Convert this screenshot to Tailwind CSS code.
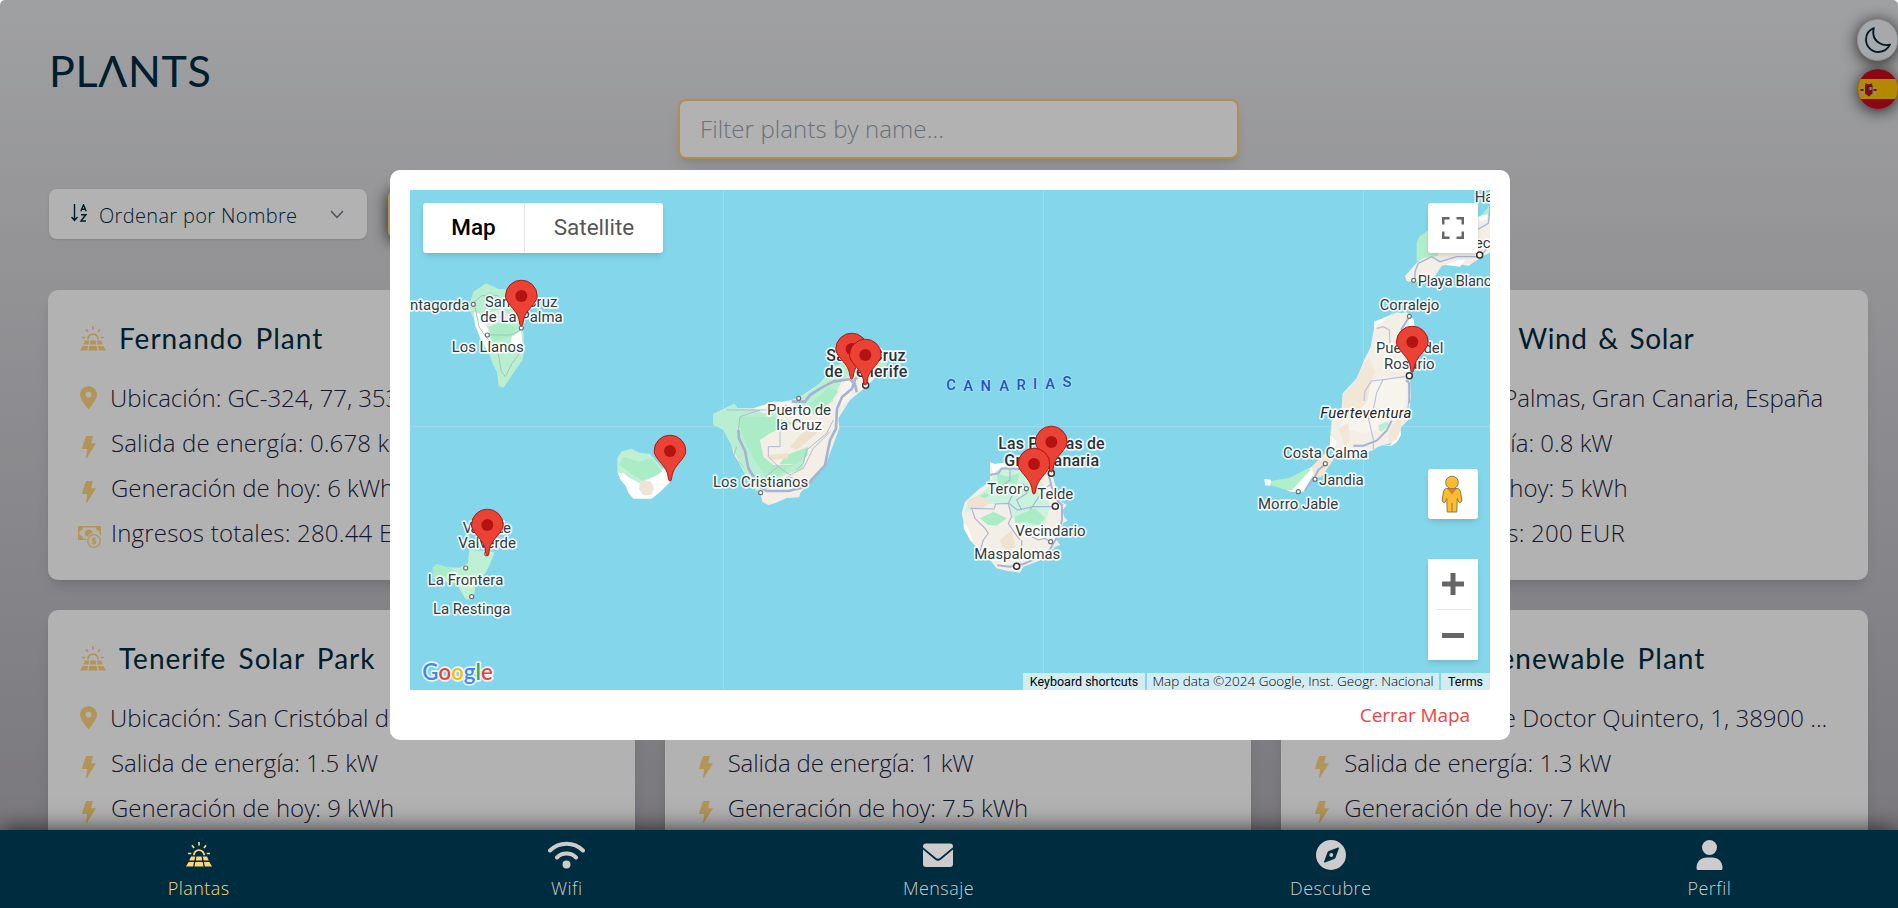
<!DOCTYPE html>
<html lang="es">
<head>
<meta charset="utf-8">
<title>Plants</title>
<script src="https://cdn.jsdelivr.net/npm/@tailwindcss/browser@4"></script>
</head>
<body class="w-[1898px] h-[908px] overflow-hidden bg-white font-['Open_Sans',sans-serif]">
<svg class="hidden">
  <symbol id="solar" viewBox="0 0 26 26"><g fill="currentColor"><path d="M5 14.6h4.2l-.9 3.9H3.2zM10.4 14.6h5.2l.6 3.9H9.8zM16.8 14.6H21l1.8 3.9h-5.100zM2.600 20h5.500l-1 4.600H0zM9.300 20h7.400l.800 4.600H8.500zM17.900 20h5.500l2.600 4.600h-7.100z"/><path d="M6.900 13.300a6.100 6.100 0 0 1 12.200 0h-1.800a4.300 4.300 0 0 0-8.600 0z"/></g><path stroke="currentColor" stroke-width="1.700" d="M13 0v3.400M6 3.200l2 2.800M20 3.200l-2 2.800M2 11.500h3.300M20.700 11.500H24"/></symbol>
  <symbol id="pin" viewBox="0 0 384 512"><path fill="currentColor" d="M215.700 499.200C267 435 384 279.400 384 192 384 86 298 0 192 0S0 86 0 192c0 87.400 117 243 168.300 307.200a30 30 0 0 0 47.400 0zM192 128a64 64 0 1 1 0 128 64 64 0 1 1 0-128z"/></symbol>
  <symbol id="bolt" viewBox="0 0 14 22"><path fill="currentColor" d="M4.200 0h6.600L9.200 7.300H14L4.700 22l-.800-.2L5.200 13H.6L0 12z"/></symbol>
  <symbol id="money" viewBox="0 0 23 22"><path fill="currentColor" fill-rule="evenodd" d="M1 0h21a1 1 0 0 1 1 1v8.500a8 8 0 0 0-1.500-1.500V5A4 4 0 0 1 18 1.500H5A4 4 0 0 1 1.500 5v4A4 4 0 0 1 5 12.500h3.500q-.5.8-.6 1.500H1a1 1 0 0 1-1-1V1a1 1 0 0 1 1-1zM11.500 3.800a3.300 3.300 0 0 1 3 3.200 8 8 0 0 0-5 3.400A3.300 3.300 0 0 1 11.500 3.800z"/><circle cx="16" cy="15" r="6.300" fill="none" stroke="currentColor" stroke-width="1.300"/><path fill="none" stroke="currentColor" stroke-width="1.200" d="M17.800 13.200q-.6-.7-1.800-.7c-2.300 0-2.300 2.300 0 2.500s2.300 2.500 0 2.500q-1.200 0-1.900-.8M16 11.200v7.600"/></symbol>
  <symbol id="marker" viewBox="-50 -140 100 146"><path fill="#ea4335" stroke="#b31412" stroke-width="3" d="M0 0C-3 0-4-3-5-9-8-36-22-47-36-65-43-75-47.500-81-47.500-90a47.500 47.500 0 0 1 95 0c0 9-4.500 15-11.500 25C22-47 8-36 5-9 4-3 3 0 0 0z"/><circle cy="-90" r="18" fill="#b31412"/></symbol>
</svg>

<div class="relative w-full h-full rounded-t-[5px] overflow-hidden bg-linear-to-b from-[#e5e6e8] to-[#aaa8b0]">
  <!-- Page content -->
  <main class="flex flex-col pl-12 pr-[30px]">
    <h1 class="h-[98px] pt-[39px] text-[43px] leading-[64px] text-[#002c3f] font-['Lato',sans-serif] pl-px tracking-[0.7px]">PL&#923;NTS</h1>
    <div class="mt-px ml-[630px] w-[561px] h-[60px] rounded-lg border-[2.500px] border-[#fccd6b] bg-white shadow-lg flex items-center pl-[20px]">
      <span class="text-[24px] font-light text-gray-400 whitespace-nowrap tracking-[0.100px]">Filter plants by name...</span>
    </div>
    <div class="flex mt-[30px] gap-[21px]">
      <div class="w-[318px] ml-px h-[50px] rounded-lg bg-white shadow flex items-center pl-[22px] pr-[23px] text-[#002c3f]">
        <svg class="w-4 h-[18px] -mt-[3px]" viewBox="0 0 16 18" fill="none" stroke="currentColor" stroke-width="1.400"><path d="M3.500 0v16M.5 13l3 3.500 3-3.500M9.800 7.300L12.500.8l2.700 6.500M10.700 5.300h3.600M10 10.800h4.800L10 17h5"/></svg>
        <span class="ml-[12px] mt-[4px] text-[20px] font-light whitespace-nowrap tracking-[0.330px]">Ordenar por Nombre</span>
        <svg class="ml-auto w-[14px] h-[9px] text-gray-500" viewBox="0 0 14 9" fill="none" stroke="currentColor" stroke-width="1.400"><path d="M1 1l6 6.500L13 1"/></svg>
      </div>
      <div class="w-[60px] h-[50px] rounded-lg bg-[#ffd57b] shadow-[0_2px_16px_rgba(0,0,0,0.8)]"></div>
    </div>

    <div class="grid grid-cols-3 gap-[30px] mt-[51px]">
      <article class="h-[290px] rounded-[10px] bg-white shadow-lg pt-[25px] pl-[30px] text-[24px] font-light text-[#1e2340]">
        <div class="flex items-center h-12 mb-3"><svg class="w-[26px] h-[26px] ml-[2px] text-[#ffd57b]"><use href="#solar"/></svg><h2 class="ml-[13px] -mt-[2px] text-[28px] font-normal text-[#002c3f] font-['Lato',sans-serif] whitespace-nowrap tracking-[1px] [word-spacing:4px]">Fernando Plant</h2></div>
        <div class="flex items-center h-[45px]"><svg class="w-[17px] h-[23px] ml-[2px] text-[#ffd57b]"><use href="#pin"/></svg><span class="ml-[13px] mt-px whitespace-nowrap tracking-[-0.050px]">Ubicación: GC-324, 77, 353</span></div>
        <div class="flex items-center h-[45px]"><svg class="w-[14px] h-[22px] ml-[4px] mt-2 text-[#ffd57b]"><use href="#bolt"/></svg><span class="ml-[15px] mt-px whitespace-nowrap tracking-[0.150px]">Salida de energía: 0.678 kW</span></div>
        <div class="flex items-center h-[45px]"><svg class="w-[14px] h-[22px] ml-[4px] mt-2 text-[#ffd57b]"><use href="#bolt"/></svg><span class="ml-[15px] mt-px whitespace-nowrap">Generación de hoy: 6 kWh</span></div>
        <div class="flex items-center h-[45px]"><svg class="w-[23px] h-[22px] mt-2 text-[#ffd57b]"><use href="#money"/></svg><span class="ml-[10px] mt-px whitespace-nowrap tracking-[0.200px]">Ingresos totales: 280.44 EUR</span></div>
      </article>
      <article class="h-[290px] rounded-[10px] bg-white shadow-lg"></article>
      <article class="h-[290px] rounded-[10px] bg-white shadow-lg pt-[25px] pl-[30px] pr-10 text-[24px] font-light text-[#1e2340]">
        <div class="flex items-center h-12 mb-3"><svg class="w-[26px] h-[26px] ml-[2px] text-[#ffd57b]"><use href="#solar"/></svg><h2 class="w-[343px] flex justify-end ml-[12px] -mt-[2px] text-[28px] font-normal text-[#002c3f] font-['Lato',sans-serif] whitespace-nowrap tracking-[0.600px] [word-spacing:3px]">Las Palmas Wind &amp; Solar</h2></div>
        <div class="flex items-center h-[45px]"><svg class="w-[17px] h-[23px] ml-[2px] text-[#ffd57b]"><use href="#pin"/></svg><span class="w-[481px] flex justify-end ml-[12px] mt-px whitespace-nowrap">Ubicación: Las Palmas, Gran Canaria, España</span></div>
        <div class="flex items-center h-[45px]"><svg class="w-[14px] h-[22px] ml-[4px] mt-2 text-[#ffd57b]"><use href="#bolt"/></svg><span class="ml-[15px] mt-px whitespace-nowrap">Salida de energía: 0.8 kW</span></div>
        <div class="flex items-center h-[45px]"><svg class="w-[14px] h-[22px] ml-[4px] mt-2 text-[#ffd57b]"><use href="#bolt"/></svg><span class="ml-[15px] mt-px whitespace-nowrap">Generación de hoy: 5 kWh</span></div>
        <div class="flex items-center h-[45px]"><svg class="w-[23px] h-[22px] mt-2 text-[#ffd57b]"><use href="#money"/></svg><span class="ml-[10px] mt-px whitespace-nowrap tracking-[0.240px]">Ingresos totales: 200 EUR</span></div>
      </article>
      <article class="h-[290px] rounded-[10px] bg-white shadow-lg pt-[25px] pl-[30px] text-[24px] font-light text-[#1e2340]">
        <div class="flex items-center h-12 mb-3"><svg class="w-[26px] h-[26px] ml-[2px] text-[#ffd57b]"><use href="#solar"/></svg><h2 class="ml-[13px] -mt-[2px] text-[28px] font-normal text-[#002c3f] font-['Lato',sans-serif] whitespace-nowrap tracking-[1px] [word-spacing:4px]">Tenerife Solar Park</h2></div>
        <div class="flex items-center h-[45px]"><svg class="w-[17px] h-[23px] ml-[2px] text-[#ffd57b]"><use href="#pin"/></svg><span class="ml-[13px] mt-px whitespace-nowrap tracking-[-0.050px]">Ubicación: San Cristóbal de</span></div>
        <div class="flex items-center h-[45px]"><svg class="w-[14px] h-[22px] ml-[4px] mt-2 text-[#ffd57b]"><use href="#bolt"/></svg><span class="ml-[15px] mt-px whitespace-nowrap tracking-[-0.050px]">Salida de energía: 1.5 kW</span></div>
        <div class="flex items-center h-[45px]"><svg class="w-[14px] h-[22px] ml-[4px] mt-2 text-[#ffd57b]"><use href="#bolt"/></svg><span class="ml-[15px] mt-px whitespace-nowrap">Generación de hoy: 9 kWh</span></div>
      </article>
      <article class="h-[290px] rounded-[10px] bg-white shadow-lg pt-[130px] pl-[30px] text-[24px] font-light text-[#1e2340]">
        <div class="flex items-center h-[45px]"><svg class="w-[14px] h-[22px] ml-[4px] mt-2 text-[#ffd57b]"><use href="#bolt"/></svg><span class="ml-[15px] mt-px whitespace-nowrap tracking-[-0.140px]">Salida de energía: 1 kW</span></div>
        <div class="flex items-center h-[45px]"><svg class="w-[14px] h-[22px] ml-[4px] mt-2 text-[#ffd57b]"><use href="#bolt"/></svg><span class="ml-[15px] mt-px whitespace-nowrap tracking-[-0.090px]">Generación de hoy: 7.5 kWh</span></div>
      </article>
      <article class="h-[290px] rounded-[10px] bg-white shadow-lg pt-[25px] pl-[30px] text-[24px] font-light text-[#1e2340]">
        <div class="flex items-center h-12 mb-3"><svg class="w-[26px] h-[26px] ml-[2px] text-[#ffd57b]"><use href="#solar"/></svg><h2 class="w-[354px] flex justify-end ml-[12px] -mt-[2px] text-[28px] font-normal text-[#002c3f] font-['Lato',sans-serif] whitespace-nowrap tracking-[1px] [word-spacing:4px]">La Palma Renewable Plant</h2></div>
        <div class="flex items-center h-[45px]"><svg class="w-[17px] h-[23px] ml-[2px] text-[#ffd57b]"><use href="#pin"/></svg><span class="w-[485px] flex justify-end ml-[12px] mt-px whitespace-nowrap">Ubicación: Calle Doctor Quintero, 1, 38900 ...</span></div>
        <div class="flex items-center h-[45px]"><svg class="w-[14px] h-[22px] ml-[4px] mt-2 text-[#ffd57b]"><use href="#bolt"/></svg><span class="ml-[15px] mt-px whitespace-nowrap tracking-[-0.050px]">Salida de energía: 1.3 kW</span></div>
        <div class="flex items-center h-[45px]"><svg class="w-[14px] h-[22px] ml-[4px] mt-2 text-[#ffd57b]"><use href="#bolt"/></svg><span class="ml-[15px] mt-px whitespace-nowrap tracking-[-0.050px]">Generación de hoy: 7 kWh</span></div>
      </article>
    </div>
  </main>

  <!-- Theme and language buttons -->
  <div class="absolute top-[19px] right-0 flex flex-col items-end gap-[8px]">
    <div class="w-[41px] h-[42px] rounded-full bg-[#f0f1f4] border border-gray-300 shadow-[0_2px_16px_rgba(0,0,0,0.8)] flex items-center justify-center">
      <svg class="w-[26px] h-[26px] text-[#002c3f]" viewBox="0 0 26 26" fill="none" stroke="currentColor" stroke-width="1.900" stroke-linejoin="round"><path d="M8.800 1.200C4 3.200 1 7.600 1 12.500 1 19.500 6.500 25 13.500 25c5 0 9.200-2.900 11.400-7.300-7.500 1.900-15.400-3-16.500-10.200-.3-2.200-.1-4.400.4-6.300z"/></svg>
    </div>
    <svg class="w-10 h-10 rounded-full shadow-[0_2px_16px_rgba(0,0,0,0.8)]" viewBox="0 0 40 40"><path fill="#c60b1e" d="M0 0h40v40H0z"/><path fill="#ffc400" d="M0 10h40v20H0z"/><path fill="#ad1519" d="M7 16h7.500v8.500l-3.700 3-3.800-3zM7 14.300l3.700 1 3.800-1-1 2H8z"/><path fill="#ccc" d="M3.500 17.500h1.700v9H3.500zM16 17.500h1.700v9H16zM11.500 18h2v3h-2z"/><path fill="#ad1519" d="M2.500 20h3v2h-3zM15.500 20h3v2h-3z"/><path fill="#005bbf" d="M10 21.500h1.600v1.500H10z"/></svg>
  </div>

  <div class="absolute inset-0 bg-black/30"></div>

  <!-- Map dialog -->
  <section class="absolute left-[390px] top-[170px] w-[1120px] h-[570px] rounded-[10px] bg-white p-5 pb-0 flex flex-col">
    <div class="relative w-[1080px] h-[500px] shrink-0 overflow-hidden bg-[#84d6ea] font-['Roboto',sans-serif]">
      <svg class="w-full h-full" viewBox="30 30 3240 1500">
        <path stroke="#fff" stroke-opacity=".2" stroke-width="3" d="M970 0v1600M1930 0v1600M2890 0v1600M0 740h3300"/>
        <!-- La Palma -->
        <path fill="#b9efd0" d="M220 335l38-25 40 18 60-2 20 40-8 60 2 90-5 25-18 25-38 57-15-5-5-42-12-22-18-52-30-60-25-60z"/>
        <path fill="#fff" d="M222 395l25 10 18 45 10 45-12 20-20-35-18-45zM335 470l28-18 5 40-20 20-15-10z"/><path fill="#e6e8ea" d="M250 400l50-10 40 20-30 20-40 30z"/><path fill="#a9ecc6" d="M265 440l40-15 45 20-20 25-50 15zM245 345l30-10 30 40-40 5z"/>
        <path fill="none" stroke="#a8c2b5" stroke-width="3" d="M225 380l12 60 20 30 35 35 12 70 12 15 20-40 30-40M262 465l70 0 30-15M215 372l30-25 50 0"/>
        <!-- La Gomera -->
        <path fill="#fff" d="M652 875l10 25 15 18 8 20 15 18h55l25-20 30-30 5-20-20-20-60-10z"/>
        <path fill="#bff0d4" d="M652 880l0-45 12-20 30-9 25 12 30 3 40 45-10 15-40 20-20 8-30-15-20-16z"/><path fill="#a9ecc6" d="M658 855l12-25 45 15 40-10 30 40-25 15-35 10-25-15z"/><path fill="#f0e4d6" d="M722 902l30 2 10 20-8 20-25 2-13-20z"/>
        <!-- El Hierro -->
        <path fill="#bff0d4" d="M208 1110l75 5-2 10-16 38-18 30-22 30-2 20-7 18-20-5-18-30-2-14-40-6-35-12-3-30 12-12 30 10 40 1 24-14z"/><path fill="#a9ecc6" d="M98 1162l12-10 50 14-10 20-50 10z"/>
        <!-- Tenerife -->
        <path fill="#f3efe6" d="M940 702l63-30 9 13h68l80-22 35-8 65-45 40-50 60-22 105 0-10 25-58 59-47 38-35 55 3 30-43 115-75 80-2 12-38 2-35 16-20 5-18-10-7-30-40-45-40-70-8-40 3-12-25-33z"/>
        <path fill="#b9efd0" d="M940 702l63-30 9 13 90 2 98-32 60-45 40-50 60-25 107 0-10 25-70 12-60 25-30 70-60 20-90 15-80 50-10 40 25 55 30 20 60-10 45-30-10 40-60 20-50 45-30 0-35-55-35-75-28-53-30-15z"/>
        <path fill="#a9ecc6" d="M1020 710l100 0 60 20-70 30-30 20 10 50 30 25 60 0-50 35-40-10-50-80-20-60zM1230 670l60-50 25 15-40 50-35 20zM1160 825l65-25-2 25-35 28-50 0z"/>
        <path fill="#f7f4ee" d="M1335 600l25 15-15 45-40 30 10-40zM1060 685l60-20 80 0-50 25-60 10z"/>
        <path fill="#eee0cf" d="M1170 800l30-35 60-35-10 30-60 50zM1100 825l65-5 0 15-55 5z"/>
        <path fill="none" stroke="#b5bccb" stroke-width="3" d="M980 690h130l50-15M1015 750l5-40 60-20M1140 750v50h-35v30l30 30-45 35M1135 860l35 25 40-20 30-60 50-50M1125 910l40-20 50 15M1300 720l-20 40-60 50 -10 40-20 20M1010 800l-10 30 30 30"/>
        <path fill="none" stroke="#a6b3d4" stroke-width="8" stroke-linejoin="round" d="M1015 750l2 25 18 38 10 52 35 55 20 13 65 0 50-12 60-65 15-75 18-35 3-60 15-35 30-25 10-30 30-22M1175 665l40 0 15-20 40-25 30-15 50-8 15 15 5 25"/>
        <!-- Gran Canaria -->
        <path fill="#f3efe6" d="M1770 847L1785 852 1825 847 1885 842 1950 862 1965 912 1975 960 2000 975 1988 990 1992 1010 2003 1022 1988 1030 1985 1060 1970 1080 1980 1095 1965 1100 1945 1125 1910 1145 1870 1160 1860 1178 1820 1172 1790 1165 1770 1140 1745 1120 1710 1080 1695 1045 1685 1000 1695 965 1740 925 1770 905z"/>
        <path fill="#fff" d="M1770 847l15 5 40-5-15 20-30 15zM1690 1030l10 5 20 50-8-3-20-35z"/>
        <path fill="#c8f3dc" d="M1790 870l30-8 55 0 50 40 25 80-15 50-60 10-30-20-20-50-70 0-60 25 10-30 55-40z"/>
        <path fill="#a9ecc6" d="M1740 1015l40-20 40 20-30 22-25-2zM1790 880l30 10 40-10-10 30-30 0-25 15zM1705 960l50-20 20 5-50 20zM1845 1010l60-25 30 30-20 20-40-10-30 5z"/>
        <path fill="#efe2d2" d="M1700 965l35-20 40 20-30 22-38-5zM1800 1080l35-30 10 50-30 20z"/>
        <path fill="none" stroke="#a9b5d6" stroke-width="3.500" d="M1712 985l70 2 5-15 40-2 25 20 50-10 60 0M1715 985l10 30 30 30 10 15-15 20-10 35M1830 865v35l-20 15 30 25-15 30 10 40-10 20 20 30 15 20M1870 910l10 30-30 20 15 30M1890 990l40-60 25-20M1865 1080v30M1895 1070l20 10 20-5 15 10"/>
        <path fill="none" stroke="#a9b5d6" stroke-width="6" stroke-linejoin="round" d="M1770 885l25-5 10-15 50 2 60 5M1945 880L1955 920 1965 955 1986 975 1986 1020 1972 1070 1950 1108 1910 1135 1870 1152 1830 1160 1792 1156"/>
        <!-- Fuerteventura -->
        <path fill="#fff" d="M2922 425L2972 405 3020 397 3042 420 3045 490 2925 500zM2970 795L3000 740 3003 765 2990 787 2975 797 2945 796z"/>
        <path fill="#f3efe6" d="M2922 445L2960 415 2990 397 3020 402 3030 450 3030 520 3030 590 3033 650 3025 720 3000 745 2970 790 2935 800 2915 812 2860 825 2800 812 2792 780 2795 715 2825 685 2828 640 2870 595 2895 535 2912 500z"/>
        <path fill="#f7f4ee" d="M2920 600l40-10 60 10-5 80-60 60-60 20-80-20 60-80z"/>
        <path fill="#f2e6d7" d="M2892 550l15-15 20 40-15 30-10 60-50 50-20-30-4-30 4-15 38-40zM2970 745l30-35 5 30-15 40-25 10zM2815 745l30-15 5 50-15 20z"/>
        <path fill="#b9efd0" d="M2970 403l15-8-8 12zM2935 735l30-12 0 12-20 20-8-4zM2790 740l5 30-5-5z"/>
        <path fill="#f2e6d7" d="M2730 865l50-50 20 25-35 50-25 5z"/>
        <path fill="#fff" d="M2790 765l20 20-10 30-10-20zM2660 930l60-60 15-10 5 25-30 50-40 0z"/>
        <path fill="#b0f0c8" d="M2595 900l22 2 50-8 60-30 5 5-55 60-15 2-65-20z"/><path fill="#fff" d="M2593 897l20 2-2 18-16-1z"/>
        <path fill="none" stroke="#b9c2da" stroke-width="3.500" d="M2930 445l20-5 18 10 2 40M3015 590l-60 8-40 5-20 30-3 30M2950 598l-20 40-10 50-15 25 15 65v30M3025 600l3 50 -5 40"/>
        <path fill="none" stroke="#a6b3d4" stroke-width="6" d="M3028 410l-25 40M3018 600l10 10 0 60M2860 797l30 0 40-15 30-30 15-30M2715 930l30-40 10-20 25-20"/>
        <!-- Lanzarote -->
        <path fill="#f3efe6" d="M3245 105l30-10v120l-30 15-40 28-45-10-35 10-20 30-60 20-25-5-5-15 35-40 60-50 90-60z"/>
        <path fill="#b0f0c8" d="M3050 245l0-55 8-20 30-22 30 0-5 80-40 5zM3245 105l30-35v40z"/><path fill="#fff" d="M3135 255l40-15 20 0-15 20zM3235 110l30 -8-5 15-20 8z"/>
        <path fill="none" stroke="#a9b5d6" stroke-width="4" d="M3045 300l0-25 10-25 40-20 25 15 50-15h70l35-40M3230 150l35-20 5-50"/>
        <!-- Town dots -->
        <g fill="#fff" stroke="#6b7074" stroke-width="3.500"><circle cx="220" cy="373" r="6"/><circle cx="262" cy="465" r="6"/><circle cx="364" cy="444" r="6"/><circle cx="260" cy="1121" r="6"/><circle cx="197" cy="1164" r="6"/><circle cx="215" cy="1250" r="6"/><circle cx="1196" cy="655" r="6"/><circle cx="1082" cy="938" r="6"/><circle cx="1879" cy="926" r="6"/><circle cx="1952" cy="1085" r="6"/><circle cx="3041" cy="301" r="6"/><circle cx="3028" cy="409" r="6"/><circle cx="2776" cy="851" r="6"/><circle cx="2745" cy="898" r="6"/><circle cx="2695" cy="935" r="6"/><g stroke="#333" stroke-width="4.500"><circle cx="1397" cy="616" r="9"/><circle cx="1954" cy="880" r="9"/><circle cx="1966" cy="979" r="9"/><circle cx="1850" cy="1159" r="9"/><circle cx="3028" cy="587" r="9"/><circle cx="3239" cy="225" r="9"/></g></g>
        <!-- Place names -->
        <g font-family="Roboto" font-size="45" fill="#333b40" stroke="#fff" stroke-opacity=".85" stroke-width="10" stroke-linejoin="round" paint-order="stroke">
          <text x="6" y="389" textLength="202">antagorda</text>
          <text x="255" y="382" textLength="217">Santa Cruz</text><text x="241" y="427" textLength="247">de La Palma</text><text x="155" y="515" textLength="216">Los Llanos</text>
          <text x="188" y="1059" textLength="145">Valverde</text><text x="175" y="1104" textLength="173">Valverde</text><text x="83" y="1215" textLength="227">La Frontera</text><text x="99" y="1301" textLength="232">La Restinga</text>
          <text x="1101" y="704" textLength="192">Puerto de</text><text x="1129" y="750" textLength="137">la Cruz</text><text x="939" y="921" textLength="286">Los Cristianos</text>
          <text x="1762" y="943" textLength="104">Teror</text><text x="1912" y="957" textLength="108">Telde</text><text x="1846" y="1068" textLength="211">Vecindario</text><text x="1723" y="1137" textLength="258">Maspalomas</text>
          <text x="3224" y="66">Haría</text><text x="3165" y="204">Arrecife</text><text x="3053" y="319" textLength="245">Playa Blanca</text><text x="2939" y="391" textLength="179">Corralejo</text>
          <text x="2928" y="520" textLength="202">Puerto del</text><text x="2952" y="566" textLength="152">Rosario</text><text x="2761" y="713" textLength="273" font-style="italic" fill="#202427">Fuerteventura</text><text x="2649" y="834" textLength="255">Costa Calma</text><text x="2757" y="914" textLength="134">Jandia</text><text x="2574" y="986" textLength="241">Morro Jable</text>
          <g font-weight="500" fill="#2b3136" font-size="48"><text x="1279" y="543" textLength="238">Santa Cruz</text><text x="1274" y="592" textLength="248">de Tenerife</text><text x="1795" y="808" textLength="319">Las Palmas de</text><text x="1813" y="857" textLength="284">Gran Canaria</text></g>
        </g>
        <g font-family="Roboto" font-weight="500" font-size="44" fill="#1b56c0" stroke="#a9e3f2" stroke-width="5" paint-order="stroke" text-anchor="middle"><text x="1653" y="630">C</text><text x="1704" y="633">A</text><text x="1757" y="634">N</text><text x="1812" y="633">A</text><text x="1863" y="630">R</text><text x="1905" y="628">I</text><text x="1950" y="626">A</text><text x="2001" y="621">S</text></g>
        <!-- Markers -->
        <g><use href="#marker" x="314" y="298" width="100" height="146"/><use href="#marker" x="760" y="763" width="100" height="146"/><use href="#marker" x="212" y="985" width="100" height="146"/><use href="#marker" x="1305" y="457" width="100" height="146"/><use href="#marker" x="1346" y="475" width="100" height="146"/><use href="#marker" x="1904" y="736" width="100" height="146"/><use href="#marker" x="1852" y="802" width="100" height="146"/><use href="#marker" x="2987" y="436" width="100" height="146"/></g>
        <text x="67" y="1501" font-family="Lato" font-weight="600" font-size="70" textLength="211" lengthAdjust="spacingAndGlyphs" stroke="#e8f7fb" stroke-width="10" stroke-linejoin="round" paint-order="stroke"><tspan fill="#4285f4">G</tspan><tspan fill="#ea4335">o</tspan><tspan fill="#fbbc05">o</tspan><tspan fill="#4285f4">g</tspan><tspan fill="#34a853">l</tspan><tspan fill="#ea4335">e</tspan></text>
      </svg>

      <div class="absolute left-[13px] top-[13px] h-[50px] flex bg-white rounded-[3px] shadow-md text-[22.500px]">
        <div class="w-[102px] flex items-center justify-center font-medium text-black border-r border-gray-200"><span>Map</span></div>
        <div class="w-[138px] flex items-center justify-center text-[#565656]"><span>Satellite</span></div>
      </div>
      <div class="absolute left-[1018px] top-[13px] w-[50px] h-[50px] bg-white rounded-[3px] shadow-md flex items-center justify-center">
        <svg class="w-[22px] h-[22px]" viewBox="0 0 22 22" fill="none" stroke="#666" stroke-width="2.500"><path d="M1.200 7.500V1.200h6.300M14.500 1.200h6.300v6.300M1.200 14.500v6.300h6.300M14.500 20.800h6.300v-6.300"/></svg>
      </div>
      <div class="absolute left-[1018px] top-[279px] w-[50px] h-[50px] bg-white rounded-[3px] shadow-md flex items-center justify-center">
        <svg class="w-[22px] h-[38px] -ml-[2px]" viewBox="0 0 22 38" fill="#fbbc2d" stroke="#8d7a4f" stroke-width="1"><path d="M5.500 13.500h11c2 0 2.800 2 3.200 4.500L21 26l-2.500 2-2.300-4.500L15.800 37H6.200l-.400-13.500L3.500 28 1 26l1.300-8c.4-2.500 1.200-4.500 3.200-4.500z"/><path stroke="none" fill="#e07f2f" d="M6.500 14h9L11 19.500z"/><path d="M11 28v9"/><circle cx="11" cy="7.500" r="6.300"/></svg>
      </div>
      <div class="absolute left-[1018px] top-[369px] w-[50px] h-[101px] bg-white shadow-md flex flex-col items-center">
        <svg class="w-[22px] h-[50px]" viewBox="0 0 22 50" stroke="#666" stroke-width="5"><path d="M0 25h22M11 14v22"/></svg>
        <div class="w-[37px] h-px bg-[#e6e6e6]"></div>
        <svg class="w-[22px] h-[50px]" viewBox="0 0 22 50" stroke="#666" stroke-width="5"><path d="M0 25.500h22"/></svg>
      </div>
      <div class="absolute right-0 bottom-0 h-[17px] flex gap-[2px] text-[12.500px] leading-[17px] text-black whitespace-nowrap">
        <div class="w-[122px] bg-[#f5f5f5]/70 text-center">Keyboard shortcuts</div>
        <div class="w-[292px] bg-[#f5f5f5]/70 text-center font-['Open_Sans'] font-light text-[13.500px]">Map data ©2024 Google, Inst. Geogr. Nacional</div>
        <div class="w-[49px] bg-[#f5f5f5]/70 text-center">Terms</div>
      </div>
    </div>
    <button class="self-end h-[54px] mr-5 text-[19px] tracking-[-0.100px] text-[#ef4444]">Cerrar Mapa</button>
  </section>

  <!-- Bottom navigation -->
  <nav class="absolute inset-x-0 bottom-0 h-[78px] bg-[#002c3f] shadow-[0_0_22px_rgba(0,0,0,0.75)] flex justify-around px-2 text-[18px] tracking-[0.450px] font-light text-[#cccccc]">
    <div class="w-[63px] flex flex-col items-center pt-[9px] text-[#ffd57b]"><svg class="w-[26px] h-[32px]"><use href="#solar"/></svg><span class="mt-[5px] leading-6">Plantas</span></div>
    <div class="w-[37px] flex flex-col items-center pt-[9px]"><svg class="w-[37px] h-[32px]" viewBox="0 0 37 32" fill="none" stroke="currentColor" stroke-width="4" stroke-linecap="round"><path d="M2 11.500c9.300-9 23.700-9 33 0M9 18.500c5.300-5.200 13.700-5.200 19 0"/><circle cx="18.500" cy="25.500" r="2" /></svg><span class="mt-[5px] leading-6">Wifi</span></div>
    <div class="w-[70px] flex flex-col items-center pt-[9px]"><svg class="w-[30px] h-[32px]" viewBox="0 0 30 32"><rect y="4.500" width="30" height="23.500" rx="3" fill="currentColor"/><path d="M-1 8.500l13.500 11.300q2.500 2 5 0L31 8.500" fill="none" stroke="#002c3f" stroke-width="1.800"/></svg><span class="mt-[5px] leading-6">Mensaje</span></div>
    <div class="w-[78px] flex flex-col items-center pt-[9px]"><svg class="w-[30px] h-[32px]" viewBox="0 0 30 32"><circle cx="15" cy="16" r="15" fill="currentColor"/><path fill="#002c3f" d="M22 8.500q1.300-.3.900 1l-3.400 9.200q-.4 1-1.300 1.300L9 23.500q-1.400.300-.900-1l3.400-9.200q.400-1 1.300-1.300z"/><circle cx="15.300" cy="16" r="1.900" fill="currentColor"/></svg><span class="mt-[5px] leading-6">Descubre</span></div>
    <div class="w-[43px] flex flex-col items-center pt-[9px]"><svg class="w-[27px] h-[32px]" viewBox="0 0 27 32" fill="currentColor"><circle cx="13.500" cy="8.500" r="7.500"/><path d="M11 18.500h5c6 0 10.500 4 10.500 10.500 0 1.500-.5 2-1.500 2H2c-1 0-1.500-.5-1.500-2C.5 22.500 5 18.500 11 18.500z"/></svg><span class="mt-[5px] leading-6">Perfil</span></div>
  </nav>
</div>
</body>
</html>
